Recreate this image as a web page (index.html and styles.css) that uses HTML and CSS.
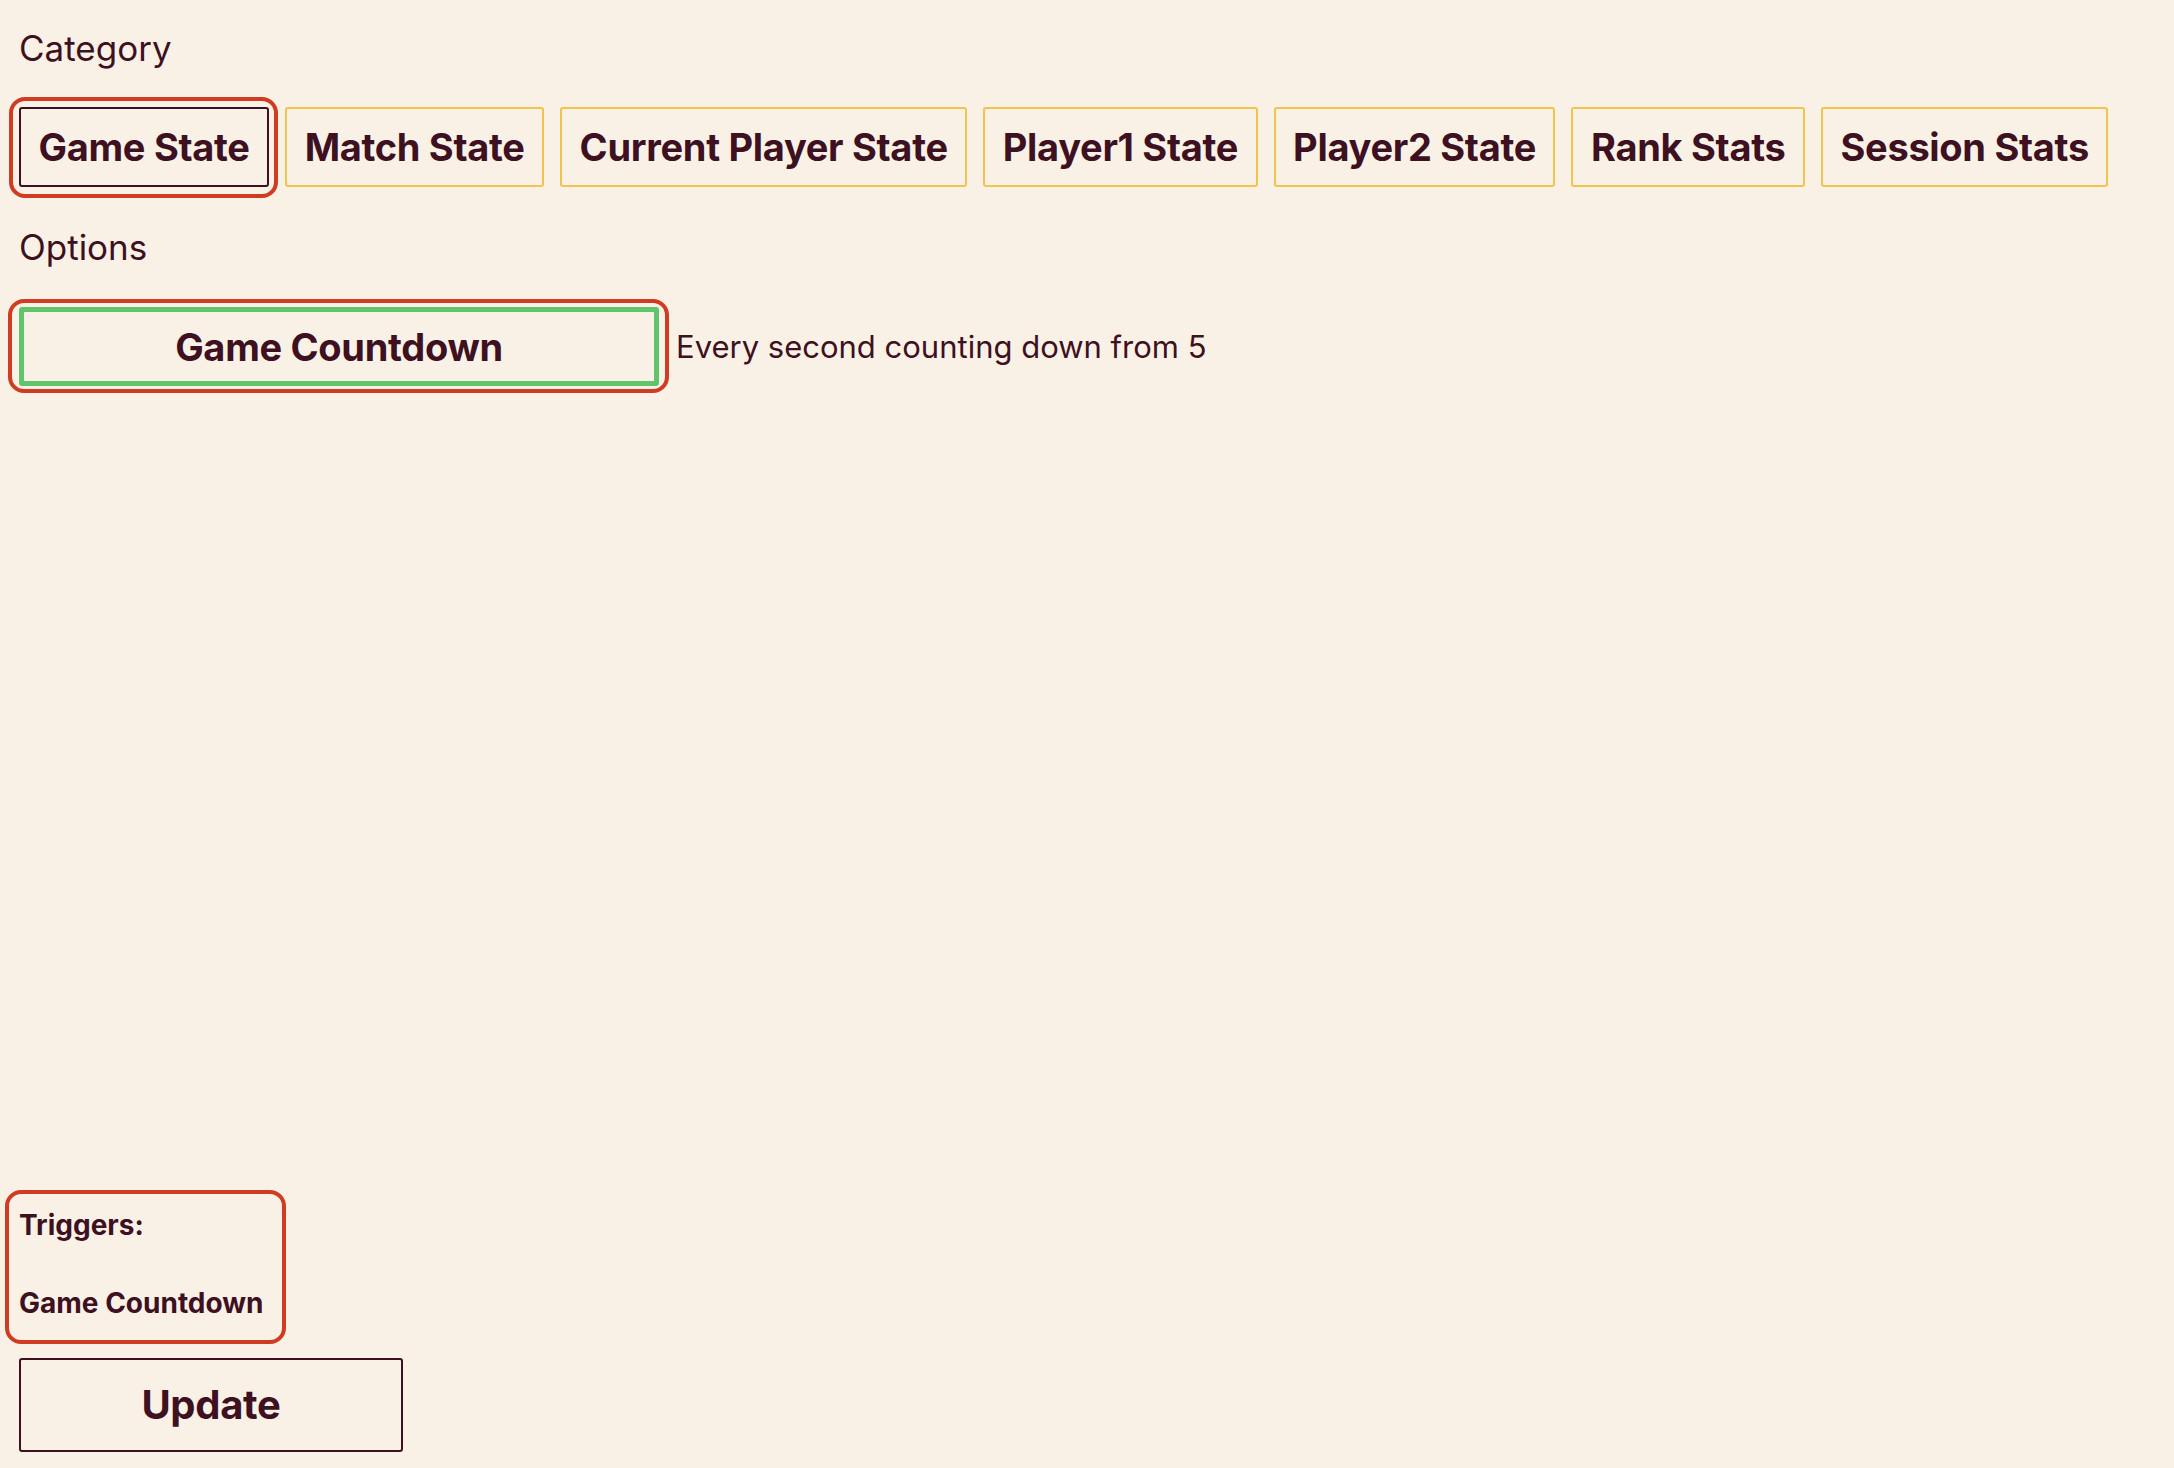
FILE: index.html
```html
<!DOCTYPE html>
<html lang="en">
<head>
<meta charset="utf-8">
<title>Trigger settings</title>
<link rel="stylesheet" href="styles.css">
</head>
<body>
<div class="page">
  <div class="top">
    <div class="label">Category</div>
    <div class="cats">
      <button class="btn btn-active hl hl-cat">Game State</button>
      <button class="btn btn-cat">Match State</button>
      <button class="btn btn-cat">Current Player State</button>
      <button class="btn btn-cat">Player1 State</button>
      <button class="btn btn-cat">Player2 State</button>
      <button class="btn btn-cat">Rank Stats</button>
      <button class="btn btn-cat">Session Stats</button>
    </div>
    <div class="label">Options</div>
    <div class="option-row">
      <button class="btn btn-option hl hl-opt">Game Countdown</button>
      <span class="option-desc">Every second counting down from 5</span>
    </div>
  </div>
  <div class="bottom">
    <div class="triggers">
      <h5 class="trig-title">Triggers:</h5>
      <h5 class="trig-item">Game Countdown</h5>
    </div>
    <button class="btn btn-update">Update</button>
  </div>
</div>
</body>
</html>
```
FILE: styles.css
```css
html, body {
  margin: 0;
  padding: 0;
  background: #faf1e6;
}
body {
  font-family: Inter, "Noto Sans", "Liberation Sans", sans-serif;
  color: #3d1121;
}
.page {
  box-sizing: border-box;
  height: 100vh;
  padding: 28px 19px 16px 19px;
  display: flex;
  flex-direction: column;
  justify-content: space-between;
}
.label {
  font-size: 35px;
  line-height: 40px;
  height: 40px;
}
.cats {
  display: flex;
  gap: 16px;
  margin: 39px 0 40px 0;
}
.btn {
  font-family: inherit;
  color: #3d1121;
  background: transparent;
  font-weight: 700;
  font-size: 38px;
  letter-spacing: -0.3px;
  line-height: 46px;
  border-radius: 3px;
  box-sizing: border-box;
  margin: 0;
  cursor: pointer;
}
.btn-cat, .btn-active {
  height: 80px;
  padding: 0 17.5px;
  border: 2px solid #f1c34f;
}
.btn-active {
  border-color: #3d1121;
}
.hl {
  position: relative;
}
.hl::after {
  content: "";
  position: absolute;
  border: 4px solid #d03b22;
  border-radius: 16px;
  pointer-events: none;
}
.hl-cat::after {
  inset: -12px -11px -13px -12px;
}
.hl-opt::after {
  inset: -13px -15px -12px -16px;
}
.option-row {
  display: flex;
  align-items: center;
  gap: 17px;
  margin-top: 40px;
}
.btn-option {
  width: 640px;
  height: 79px;
  border: 5px solid #5fc46c;
}
.option-desc {
  font-size: 31px;
  line-height: 36px;
}
.bottom {
  display: flex;
  flex-direction: column;
  align-items: flex-start;
}
.triggers {
  margin-left: -14px;
  border: 4px solid #d03b22;
  border-radius: 16px;
  padding: 15px 18px 21px 10px;
}
.triggers h5 {
  margin: 0;
  font-size: 28px;
  line-height: 32px;
  font-weight: 700;
}
.trig-item {
  margin-top: 46px !important;
}
.btn-update {
  margin-top: 14px;
  width: 384px;
  height: 94px;
  border: 2px solid #3d1121;
  font-size: 40px;
}
```
